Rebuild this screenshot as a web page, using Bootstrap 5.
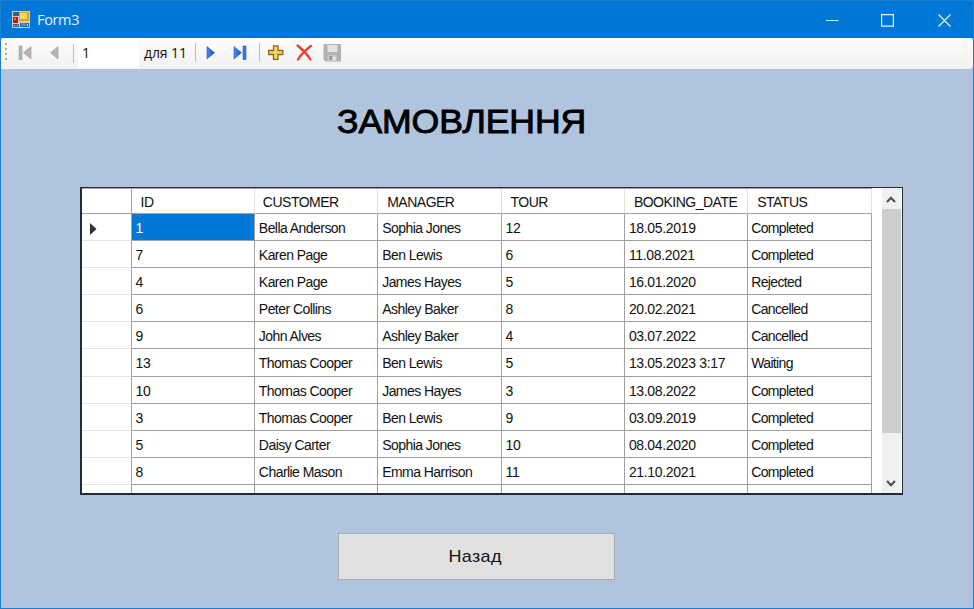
<!DOCTYPE html>
<html lang="uk">
<head>
<meta charset="utf-8">
<title>Form3</title>
<link rel="stylesheet" href="https://cdn.jsdelivr.net/npm/bootstrap@5.3.0/dist/css/bootstrap.min.css">
<style>
body{width:974px;height:609px;overflow:hidden;font-family:"Liberation Sans",Arial,sans-serif;color:#111;font-size:14px}
.win{width:974px;height:609px;background:#b0c4de;border:1px solid #1a80d4}
.titlebar{height:37px;background:#0078d7;color:#fff;font:15px/36px "Open Sans","Noto Sans",sans-serif;padding-left:11px}
.titlebar .cap{margin-left:7px;font-size:14.5px;letter-spacing:-.35px;color:#e3f1fc;line-height:34px}
.tools{height:31px;background:linear-gradient(#fdfdfd,#f1f1f1);border-radius:3px 4px 4px 0;font-family:"Open Sans","Noto Sans",sans-serif;font-size:14px}
.tools svg,.titlebar svg{display:block;flex:none}
.sep{width:1px;height:19px;background:#bdbdbd;flex:none}
.posbox{width:61px;height:29px;line-height:28px;background:#fff;padding-left:4px;margin-left:4px}
.total{margin-left:5px;line-height:28px;height:30px;letter-spacing:-.1px}
.heading{font-size:33px;line-height:38px;letter-spacing:-.1px;color:#000;-webkit-text-stroke:.9px #000;margin:34px 0 0 336px;width:252px;white-space:nowrap;transform:scaleX(1.079);transform-origin:0 0}
.gridbox{width:823px;height:308px;margin:46px 0 0 79px;border:2px solid #252a2e;border-width:1.5px 1.5px 2px 2px;background:#fff;overflow:hidden}
.sheet{width:790px;border-top:1px solid #a8a8a8}
.rw{height:27.1px;flex:none}
.rw>div{width:123.35px;flex:none;border-right:1px solid #a0a0a0;border-bottom:1px solid #a0a0a0;padding-left:4px;line-height:28px;letter-spacing:-.6px;white-space:nowrap;overflow:hidden}
.rw>div:nth-child(2),.rw>div:nth-child(5),.rw>div:nth-child(6){letter-spacing:-.33px}
.rw>div:nth-child(3),.rw>div:nth-child(4){letter-spacing:-.55px}
.rw>div:nth-child(7){padding-left:3px;letter-spacing:-.65px}
.rw>div:first-child{width:49.5px;border-bottom-color:#e5e5e5;padding-left:8px}
.rw.hd{height:25px}
.rw.hd>div{border-right-color:#e2e2e2;padding-left:9px;line-height:26px;letter-spacing:-.5px}
.rw.hd>div:nth-child(3){padding-left:8px}
.rw.hd>div:first-child{border-right-color:#a0a0a0;border-bottom-color:#a0a0a0}
.rw>div.picked{background:#0078d7;color:#fff}
.scroller{width:19px;background:#f0f0f0;margin-right:1px}
.thumb{height:224px;background:#cdcdcd}
.back{width:277px;height:47px;background:#e1e1e1;border:1px solid #adadad;border-radius:0;margin:38px 0 0 337px;font-size:17px;line-height:44px;padding:0 2px 0 0;color:#111}
.back:hover{background:#e5f1fb}
.back span{display:inline-block;letter-spacing:.3px;transform:scaleX(1.06)}
</style>
</head>
<body>
<div class="win d-flex flex-column">
<header class="titlebar d-flex align-items-center">
<svg width="18" height="17" viewBox="0 0 18 17"><path fill="#c9ced3" d="M0 0h18v17H0z"/><path fill="#35608e" d="M1 1h6v4H1zM1 13h6v3H1zM8 12h9v4H8z"/><path fill="#c61212" d="M1 6h5v6H1z"/><path fill="#f4725e" d="M2 7h2v2H2z"/><path fill="#e3a30c" d="M7 1h10v9H7z"/><path fill="#ffd75a" d="M8 2h7v6H8z"/><path fill="#4f86e0" d="M9 12h5v3H9z"/><path fill="#d7e3ef" d="M2 14h1v1H2zM5 14h1v1H5zM15 13h1v2h-1z"/></svg>
<span class="cap">Form3</span>
<svg class="ms-auto" width="148" height="36" viewBox="0 0 148 36" fill="none" stroke="#e3f1fc" stroke-width="1.2"><path d="M1 18.500h12.500M56.600 12.600h11.800v11.600H56.600zM113.500 12.500l12 12m0-12l-12 12"/></svg>
</header>
<nav class="tools d-flex align-items-center">
<svg width="72" height="31" viewBox="0 0 72 31"><path fill="#aaa" d="M4 5h2v2H4zM4 10h2v2H4zM4 15h2v2H4zM4 20h2v2H4z"/><path fill="#b4b4b4" stroke="#a6a6a6" stroke-width=".7" d="M18 8h3v13.500h-3zM30 8.500v12.500L22.500 14.700zM57 8.500v12.500L49.500 14.700z"/></svg>
<span class="sep"></span>
<span class="posbox">1</span>
<span class="total text-nowrap">для 11</span>
<svg class="ms-auto" width="783" height="31" viewBox="189 0 783 31">
<defs><linearGradient id="blu"><stop stop-color="#4b8cf0"/><stop offset="1" stop-color="#1a4bc4"/></linearGradient></defs>
<path d="M194.500 5v19M258.500 5v19" stroke="#bdbdbd"/>
<path fill="url(#blu)" stroke="#2559c9" stroke-width=".6" d="M206 8.500v12.500l7.500-6.300z"/><path fill="url(#blu)" stroke="#2559c9" stroke-width=".6" d="M233 8.500v12.500l7.500-6.300z"/><path fill="#3f78dc" stroke="#2559c9" stroke-width=".6" d="M242 8h3v13.500h-3z"/>
<path d="M272.500 8h4.500v4.500h4.800v4h-4.800v4.800h-4.500v-4.800h-4.800v-4h4.800z" fill="#fbd75f" stroke="#916719" stroke-width="1.300"/>
<path d="M296.500 7.500c4 3 9.500 8.500 13 14M310 8c-5 3.500-10 8.500-13 13.500" fill="none" stroke="#f0402a" stroke-width="2.300" stroke-linecap="round"/>
<g transform="translate(-.5 0)"><path fill="#b2b2b2" d="M323 6h17.500v17.500H325l-2-2z"/><path fill="#e3e3e3" d="M327 7h10v7h-10z"/><path fill="#c9c9c9" d="M327 17h9v6h-9z"/><path fill="#999" d="M329 18h2.500v4H329z"/><path fill="#eee" d="M333 19h2v3h-2z"/></g>
</svg>
</nav>
<main>
<h1 class="heading">ЗАМОВЛЕННЯ</h1>
<section class="gridbox d-flex justify-content-between">
<div class="sheet">
<div class="rw hd d-flex"><div></div><div>ID</div><div>CUSTOMER</div><div>MANAGER</div><div>TOUR</div><div>BOOKING_DATE</div><div>STATUS</div></div>
<div class="rw d-flex"><div><svg class="d-block" width="8" height="26" viewBox="0 0 8 26"><path fill="#333" d="M0 9l6.500 6L0 21z"/></svg></div><div class="picked">1</div><div>Bella Anderson</div><div>Sophia Jones</div><div>12</div><div>18.05.2019</div><div>Completed</div></div>
<div class="rw d-flex"><div></div><div>7</div><div>Karen Page</div><div>Ben Lewis</div><div>6</div><div>11.08.2021</div><div>Completed</div></div>
<div class="rw d-flex"><div></div><div>4</div><div>Karen Page</div><div>James Hayes</div><div>5</div><div>16.01.2020</div><div>Rejected</div></div>
<div class="rw d-flex"><div></div><div>6</div><div>Peter Collins</div><div>Ashley Baker</div><div>8</div><div>20.02.2021</div><div>Cancelled</div></div>
<div class="rw d-flex"><div></div><div>9</div><div>John Alves</div><div>Ashley Baker</div><div>4</div><div>03.07.2022</div><div>Cancelled</div></div>
<div class="rw d-flex"><div></div><div>13</div><div>Thomas Cooper</div><div>Ben Lewis</div><div>5</div><div>13.05.2023 3:17</div><div>Waiting</div></div>
<div class="rw d-flex"><div></div><div>10</div><div>Thomas Cooper</div><div>James Hayes</div><div>3</div><div>13.08.2022</div><div>Completed</div></div>
<div class="rw d-flex"><div></div><div>3</div><div>Thomas Cooper</div><div>Ben Lewis</div><div>9</div><div>03.09.2019</div><div>Completed</div></div>
<div class="rw d-flex"><div></div><div>5</div><div>Daisy Carter</div><div>Sophia Jones</div><div>10</div><div>08.04.2020</div><div>Completed</div></div>
<div class="rw d-flex"><div></div><div>8</div><div>Charlie Mason</div><div>Emma Harrison</div><div>11</div><div>21.10.2021</div><div>Completed</div></div>
<div class="rw d-flex"><div></div><div></div><div></div><div></div><div></div><div></div><div></div></div>
</div>
<div class="scroller d-flex flex-column">
<svg class="d-block" width="19" height="21" viewBox="0 0 19 21"><path d="M5 14l4-4.200 4 4.200" fill="none" stroke="#505050" stroke-width="2.200"/></svg>
<div class="thumb"></div>
<svg class="d-block mt-auto" width="19" height="21" viewBox="0 0 19 21"><path d="M5 9l4 4.200 4-4.200" fill="none" stroke="#505050" stroke-width="2.200"/></svg>
</div>
</section>
<button class="btn back d-block" type="button"><span>Назад</span></button>
</main>
</div>
<script src="https://cdn.jsdelivr.net/npm/bootstrap@5.3.0/dist/js/bootstrap.bundle.min.js"></script>
</body>
</html>
